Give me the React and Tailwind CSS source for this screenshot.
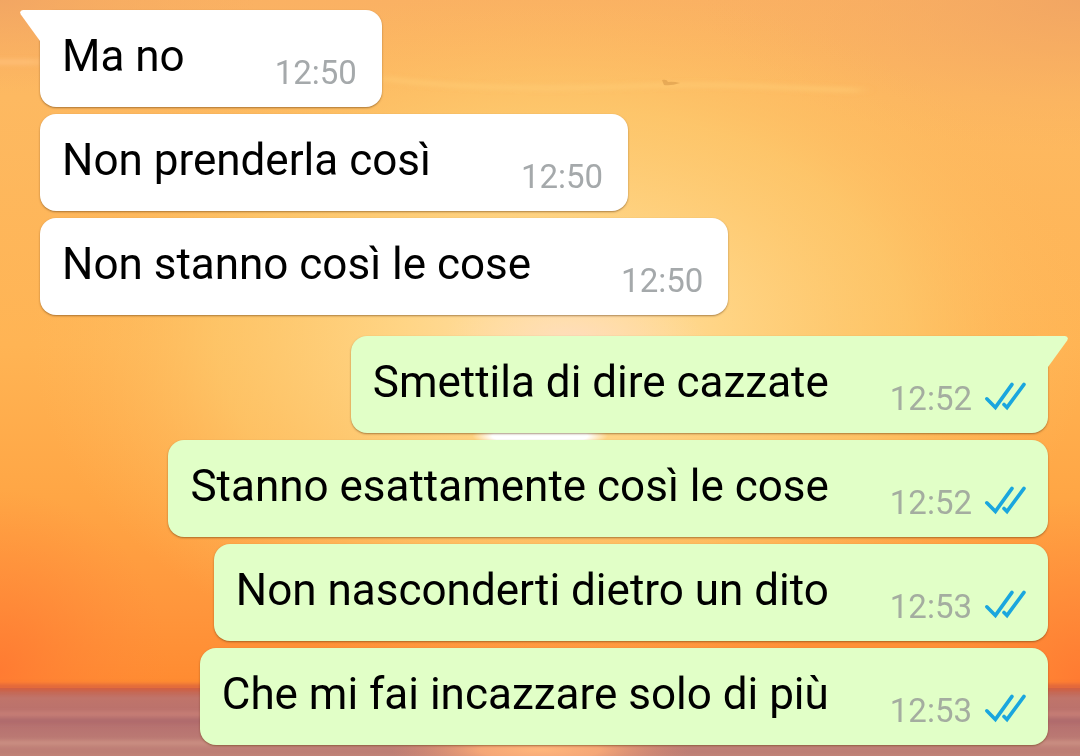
import React from 'react';

const groups = [
  {
    side: 'in',
    messages: [
      { text: 'Ma no', time: '12:50' },
      { text: 'Non prenderla così', time: '12:50' },
      { text: 'Non stanno così le cose', time: '12:50' },
    ],
  },
  {
    side: 'out',
    messages: [
      { text: 'Smettila di dire cazzate', time: '12:52' },
      { text: 'Stanno esattamente così le cose', time: '12:52' },
      { text: 'Non nasconderti dietro un dito', time: '12:53' },
      { text: 'Che mi fai incazzare solo di più', time: '12:53' },
    ],
  },
];

// Sunset over the sea
const Wallpaper = () => (
  <svg
    className="absolute inset-0 h-full w-full"
    viewBox="0 0 1080 756"
    preserveAspectRatio="none"
    aria-hidden="true"
  >
    <defs>
      <linearGradient id="sky" x1="0" y1="0" x2="0" y2="1">
        <stop offset="0" stopColor="#fab163" />
        <stop offset="0.14" stopColor="#fdb961" />
        <stop offset="0.5" stopColor="#ffb454" />
        <stop offset="0.72" stopColor="#ffa645" />
        <stop offset="0.88" stopColor="#ff963c" />
        <stop offset="1" stopColor="#ff8a30" />
      </linearGradient>
      <linearGradient id="sea" x1="0" y1="0" x2="0" y2="1">
        <stop offset="0" stopColor="#c6604a" />
        <stop offset="0.15" stopColor="#c0746a" />
        <stop offset="0.5" stopColor="#b5706f" />
        <stop offset="1" stopColor="#c18378" />
      </linearGradient>
      <radialGradient id="glow">
        <stop offset="0" stopColor="#ffe2ae" />
        <stop offset="0.3" stopColor="#ffd88a" stopOpacity="0.9" />
        <stop offset="0.65" stopColor="#fdcc70" stopOpacity="0.65" />
        <stop offset="1" stopColor="#feb95c" stopOpacity="0" />
      </radialGradient>
      <radialGradient id="dusk">
        <stop offset="0" stopColor="#ff7832" stopOpacity="0.85" />
        <stop offset="1" stopColor="#ff8a3a" stopOpacity="0" />
      </radialGradient>
      <radialGradient id="haze">
        <stop offset="0" stopColor="#f1a563" stopOpacity="0.9" />
        <stop offset="1" stopColor="#f8ad60" stopOpacity="0" />
      </radialGradient>
      <radialGradient id="halo">
        <stop offset="0" stopColor="#ffdcbc" stopOpacity="0.8" />
        <stop offset="1" stopColor="#ffdcac" stopOpacity="0" />
      </radialGradient>
      <radialGradient id="sun">
        <stop offset="0" stopColor="#ffffff" />
        <stop offset="0.7" stopColor="#ffffff" />
        <stop offset="1" stopColor="#ffffff" stopOpacity="0" />
      </radialGradient>
      <radialGradient id="reflection">
        <stop offset="0" stopColor="#ffb67c" />
        <stop offset="0.4" stopColor="#ffae78" stopOpacity="0.85" />
        <stop offset="1" stopColor="#e08a70" stopOpacity="0" />
      </radialGradient>
      <filter id="soft" x="-20%" y="-100%" width="140%" height="300%">
        <feGaussianBlur stdDeviation="8 2" />
      </filter>
    </defs>
    <rect width="1080" height="690" fill="url(#sky)" />
    <ellipse cx="0" cy="0" rx="260" ry="90" fill="url(#haze)" />
    <ellipse cx="1080" cy="0" rx="380" ry="150" fill="url(#haze)" />
    <ellipse cx="560" cy="335" rx="530" ry="350" fill="url(#glow)" />
    <ellipse cx="0" cy="670" rx="170" ry="180" fill="url(#dusk)" />
    <ellipse cx="1080" cy="680" rx="150" ry="180" fill="url(#dusk)" />
    <ellipse cx="575" cy="335" rx="130" ry="40" fill="url(#halo)" />
    <ellipse cx="540" cy="436" rx="68" ry="12" fill="url(#sun)" />
    <g filter="url(#soft)" fill="none">
      <path
        d="M380 78 C450 88 540 90 640 86 S800 90 860 90"
        stroke="#ffcb74"
        strokeWidth="5"
        opacity="0.6"
      />
      <path d="M-20 62 H42" stroke="#ffc27a" strokeWidth="6" opacity="0.7" />
    </g>
    <path
      d="M662 80 q5 -1 6 2 q5 -1 12 1 q-9 3 -16 2 z"
      fill="#d99a4a"
      opacity="0.6"
    />
    <rect y="688" width="1080" height="68" fill="url(#sea)" />
    <g filter="url(#soft)" fill="none">
      <path d="M-20 687 H1100" stroke="#d8603c" strokeWidth="5" />
      <path d="M-20 714 H1100" stroke="#cf857a" strokeWidth="3" />
      <path d="M-20 721 H1100" stroke="#ad696c" strokeWidth="4" />
      <path d="M-20 743 H1100" stroke="#cf9486" strokeWidth="4" />
      <path d="M-20 752 H1100" stroke="#b87870" strokeWidth="2" />
    </g>
    <ellipse cx="540" cy="750" rx="150" ry="24" fill="url(#reflection)" />
  </svg>
);

const ReadTicks = () => (
  <svg
    className="mb-[6px] ml-3 h-8 w-[42px] overflow-visible"
    viewBox="0 0 42 32"
    fill="none"
    stroke="#1aa6de"
    strokeWidth="3.6"
    strokeLinecap="round"
    role="img"
    aria-label="Read"
  >
    <path d="M2.8 17.8 L11.4 26.4 L28 3.4" />
    <path d="M20 23.4 L23 26.4 L40 3.4" />
  </svg>
);

const Tail = ({ side }) =>
  side === 'in' ? (
    <svg className="absolute top-0 -left-5 h-8 w-9" viewBox="0 0 36 32" aria-hidden="true">
      <path d="M36 0 H3 Q-1 0.500 0.800 4.500 L20 31 H36 Z" fill="#ffffff" />
    </svg>
  ) : (
    <svg className="absolute top-0 -right-5 h-8 w-9" viewBox="0 0 36 32" aria-hidden="true">
      <path d="M0 0 H33 Q37 0.500 35.200 4.500 L16 31 H0 Z" fill="#e1ffc7" />
    </svg>
  );

const Bubble = ({ message, side, first }) => {
  const out = side === 'out';

  return (
    <li
      className={`relative flex items-end rounded-2xl pt-5 pb-[14px] pl-[22px] shadow-[0_1px_2px_rgba(90,50,10,0.5)] ${
        out ? 'bg-[#e1ffc7] pr-[22px]' : 'bg-white pr-[25px]'
      }`}
    >
      {first && <Tail side={side} />}
      <p className="pb-[11px] text-[44px] leading-[52px] text-black">{message.text}</p>
      <time
        className={`text-[33px] leading-10 ${
          out ? 'ml-[61px] text-[#a4ada0]' : 'ml-[90px] text-[#a5a9ab]'
        }`}
      >
        {message.time}
      </time>
      {out && <ReadTicks />}
    </li>
  );
};

const App = () => {
  return (
    <main className="relative min-h-screen overflow-hidden bg-[#ffb657] font-[Roboto,sans-serif]">
      <Wallpaper />
      <div className="relative flex flex-col gap-[21px] pt-[10px] pr-8 pb-[11px] pl-10">
        {groups.map((group) => (
          <ul
            key={group.side}
            className={`flex flex-col gap-[7px] ${group.side === 'out' ? 'items-end' : 'items-start'}`}
          >
            {group.messages.map((message, i) => (
              <Bubble key={message.text} message={message} side={group.side} first={i === 0} />
            ))}
          </ul>
        ))}
      </div>
    </main>
  );
};

export default App;
